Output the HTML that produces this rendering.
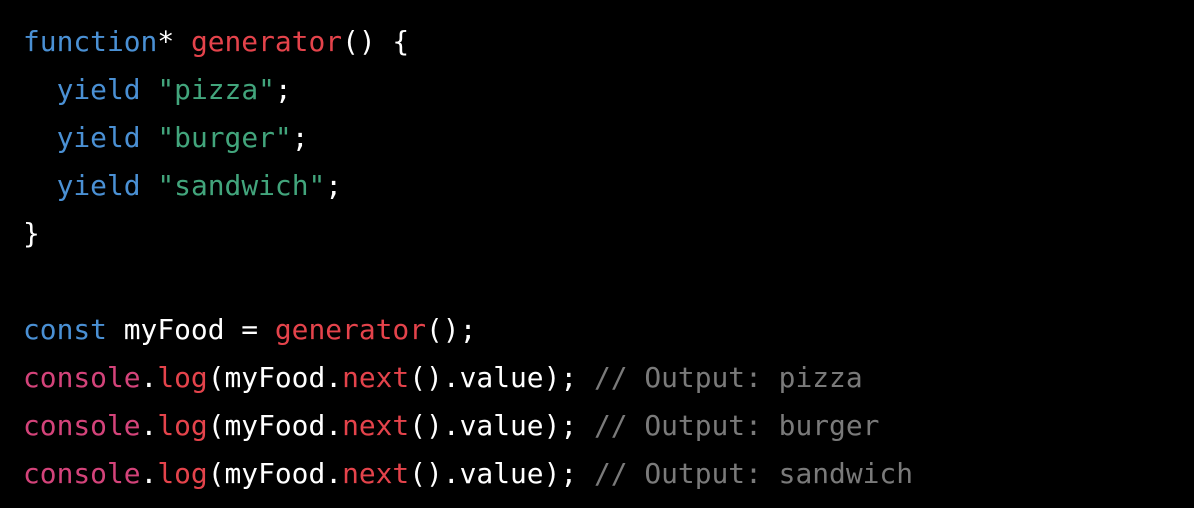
<!DOCTYPE html>
<html><head><style>
html,body{margin:0;padding:0;background:#000;width:1194px;height:508px;overflow:hidden}
pre{margin:0;position:absolute;left:23px;top:18px;font-family:"DejaVu Sans Mono","Liberation Mono",monospace;font-size:27.9px;line-height:48px;color:#fff}
.b{color:#4a90d4}.r{color:#e4434b}.g{color:#42a57c}.p{color:#d4437a}.c{color:#7a7a7a}
</style></head><body><pre><span class="b">function</span>* <span class="r">generator</span>() {
  <span class="b">yield</span> <span class="g">"pizza"</span>;
  <span class="b">yield</span> <span class="g">"burger"</span>;
  <span class="b">yield</span> <span class="g">"sandwich"</span>;
}

<span class="b">const</span> myFood = <span class="r">generator</span>();
<span class="p">console</span>.<span class="r">log</span>(myFood.<span class="r">next</span>().value); <span class="c">// Output: pizza</span>
<span class="p">console</span>.<span class="r">log</span>(myFood.<span class="r">next</span>().value); <span class="c">// Output: burger</span>
<span class="p">console</span>.<span class="r">log</span>(myFood.<span class="r">next</span>().value); <span class="c">// Output: sandwich</span></pre></body></html>
